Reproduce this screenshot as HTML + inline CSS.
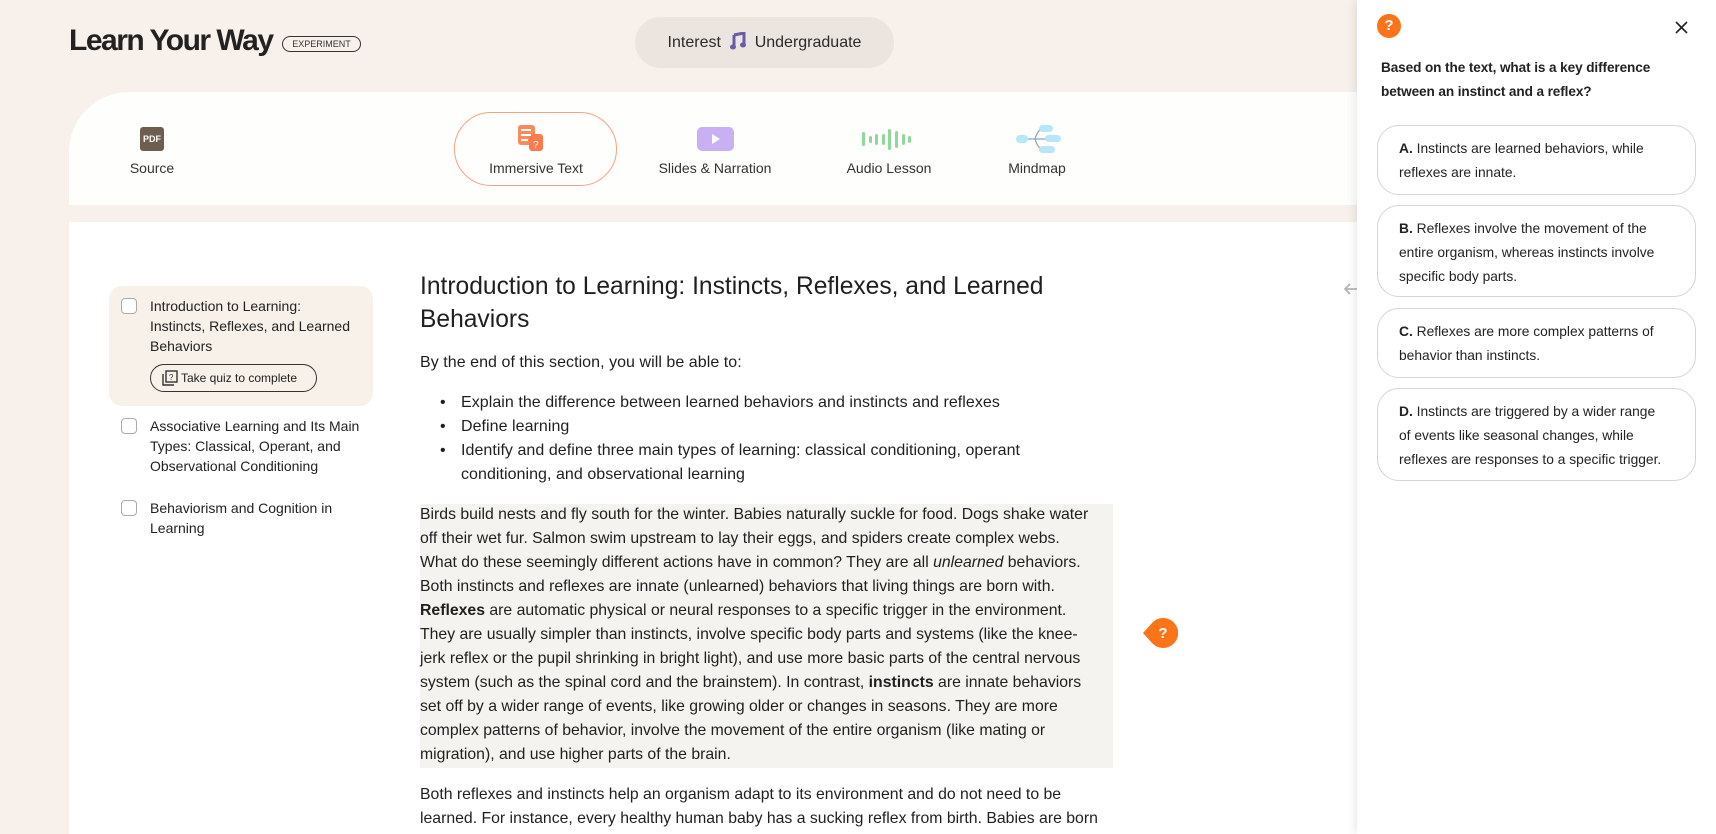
<!DOCTYPE html>
<html><head><meta charset="utf-8"><style>
*{box-sizing:border-box;margin:0;padding:0}
body{width:1716px;height:834px;overflow:hidden;background:#f7f0eb;font-family:"Liberation Sans",sans-serif;color:#1f1f1f;position:relative}
.abs{position:absolute}
.nw{white-space:nowrap}
.title{left:69px;top:24px;font-size:30px;font-weight:bold;letter-spacing:-1.5px;color:#222}
.badge{left:282px;top:36px;width:79px;height:16px;border:1.3px solid #333;border-radius:9px;font-size:9px;text-align:center;line-height:14px;color:#333}
.pill{left:635px;top:17px;width:259px;height:51px;background:#ebe4df;border-radius:26px;font-size:16px;line-height:51px;text-align:center;color:#2a2a2a}
.card{left:69px;top:92px;width:1288px;height:113px;background:#fefefc;border-top-left-radius:60px}
.content{left:69px;top:222px;width:1288px;height:612px;background:#fff}
.tab{top:160px;font-size:14px;color:#333;transform:translateX(-50%)}
.side{font-size:14px;line-height:20px;color:#222}
.cb{width:16px;height:16px;border:1.3px solid #aaa;border-radius:4px;background:#fff}
.body{font-size:16px;letter-spacing:0.05px;line-height:24px;color:#1f1f1f}
.body2{font-size:15.8px;letter-spacing:0;line-height:24px;color:#1f1f1f}
.opt{left:1377px;width:319px;border:1.3px solid #d5d5d5;border-radius:22px;padding:11px 0 0 21px;font-size:13.8px;line-height:24px;color:#222}
</style></head><body>
<div class="abs title nw">Learn Your Way</div>
<div class="abs badge">EXPERIMENT</div>
<div class="abs pill nw">Interest &nbsp;<svg width="16" height="18" style="vertical-align:-3px"><path d="M4 3 L14 1 V13" stroke="#6a5aa8" stroke-width="3" fill="none"/><path d="M4 3 V15" stroke="#6a5aa8" stroke-width="3"/><ellipse cx="3" cy="15" rx="3" ry="2.5" fill="#6a5aa8"/><ellipse cx="13" cy="13" rx="3" ry="2.5" fill="#6a5aa8"/></svg>&nbsp; Undergraduate</div>

<div class="abs card"></div>
<div class="abs content"></div>

<div class="abs" style="left:140px;top:127px;width:24px;height:24px;background:#6e5e4f;border-radius:3px;color:#fff;font-size:9px;font-weight:bold;text-align:center;line-height:24px">PDF</div>
<div class="abs tab" style="left:152px">Source</div>
<div class="abs" style="left:454px;top:112px;width:163px;height:74px;border:1.3px solid #f3a383;border-radius:37px"></div>
<svg class="abs" style="left:517px;top:124px" width="36" height="30"><rect x="1" y="1" width="17" height="20" rx="3" fill="#f98a5c"/><rect x="12" y="10" width="14" height="17" rx="3" fill="#fb7b4e"/><rect x="4" y="5" width="10" height="2" fill="#fff"/><rect x="4" y="10" width="10" height="2" fill="#fff"/><rect x="4" y="15" width="7" height="2" fill="#fff"/><text x="16" y="24" font-size="10" fill="#fff" font-family="Liberation Sans">?</text></svg>
<div class="abs tab" style="left:536px">Immersive Text</div>
<div class="abs" style="left:697px;top:127px;width:37px;height:24px;background:#c9b0f2;border-radius:5px"></div>
<svg class="abs" style="left:710px;top:133px" width="12" height="12"><path d="M2 1 L10 6 L2 11Z" fill="#fff"/></svg>
<div class="abs tab" style="left:715px">Slides &amp; Narration</div>
<svg class="abs" style="left:862px;top:128px" width="56" height="24"><g fill="#8fd89a"><rect x="0" y="4" width="3" height="14" rx="1.5"/><rect x="7" y="8" width="3" height="7" rx="1.5"/><rect x="13" y="6" width="3" height="11" rx="1.5"/><rect x="20" y="6" width="3" height="11" rx="1.5"/><rect x="26" y="1" width="3" height="21" rx="1.5"/><rect x="33" y="3" width="3" height="17" rx="1.5"/><rect x="40" y="6" width="3" height="11" rx="1.5"/><rect x="46" y="8" width="3" height="7" rx="1.5"/></g></svg>
<div class="abs tab" style="left:889px">Audio Lesson</div>
<svg class="abs" style="left:1015px;top:124px" width="48" height="30"><path d="M13 15 L20 15 M20 15 Q23 5 28 5 M20 15 L32 15 M20 15 Q23 25 28 25" stroke="#8aa9b8" stroke-width="1.3" fill="none"/><g fill="#b8e6f7"><rect x="1" y="11" width="12" height="8" rx="4"/><rect x="24" y="1" width="14" height="7" rx="3.5"/><rect x="30" y="11" width="16" height="7" rx="3.5"/><rect x="24" y="22" width="16" height="7" rx="3.5"/></g></svg>
<div class="abs tab" style="left:1037px">Mindmap</div>

<div class="abs" style="left:109px;top:286px;width:264px;height:120px;background:#f7f1ea;border-radius:13px"></div>
<div class="abs cb" style="left:121px;top:298px"></div>
<div class="abs side nw" style="left:150px;top:296px">Introduction to Learning:<br>Instincts, Reflexes, and Learned<br>Behaviors</div>
<div class="abs nw" style="left:150px;top:364px;width:167px;height:28px;border:1.3px solid #333;border-radius:14px;font-size:12px;line-height:26px;padding-left:30px;color:#222">Take quiz to complete</div>
<svg class="abs" style="left:162px;top:370px" width="16" height="16"><rect x="4" y="1" width="11" height="11" fill="none" stroke="#333" stroke-width="1.4"/><path d="M1 4 V15 H12" fill="none" stroke="#333" stroke-width="1.4"/><text x="7" y="10" font-size="8" font-family="Liberation Sans" fill="#333">?</text></svg>
<div class="abs cb" style="left:121px;top:418px"></div>
<div class="abs side nw" style="left:150px;top:416px">Associative Learning and Its Main<br>Types: Classical, Operant, and<br>Observational Conditioning</div>
<div class="abs cb" style="left:121px;top:500px"></div>
<div class="abs side nw" style="left:150px;top:498px">Behaviorism and Cognition in<br>Learning</div>

<div class="abs nw" style="left:420px;top:270px;font-size:24.6px;line-height:33px;color:#1f1f1f">Introduction to Learning: Instincts, Reflexes, and Learned<br>Behaviors</div>
<div class="abs body nw" style="left:420px;top:351px">By the end of this section, you will be able to:</div>
<div class="abs body nw" style="left:440px;top:391px">•<br>•<br>•</div>
<div class="abs body nw" style="left:461px;top:391px">Explain the difference between learned behaviors and instincts and reflexes<br>Define learning<br>Identify and define three main types of learning: classical conditioning, operant<br>conditioning, and observational learning</div>
<div class="abs" style="left:420px;top:504px;width:693px;height:264px;background:#f5f3f0"></div>
<div class="abs body2 nw" style="left:420px;top:503px">Birds build nests and fly south for the winter. Babies naturally suckle for food. Dogs shake water<br>off their wet fur. Salmon swim upstream to lay their eggs, and spiders create complex webs.<br>What do these seemingly different actions have in common? They are all <i>unlearned</i> behaviors.<br>Both instincts and reflexes are innate (unlearned) behaviors that living things are born with.<br><b>Reflexes</b> are automatic physical or neural responses to a specific trigger in the environment.<br>They are usually simpler than instincts, involve specific body parts and systems (like the knee-<br>jerk reflex or the pupil shrinking in bright light), and use more basic parts of the central nervous<br>system (such as the spinal cord and the brainstem). In contrast, <b>instincts</b> are innate behaviors<br>set off by a wider range of events, like growing older or changes in seasons. They are more<br>complex patterns of behavior, involve the movement of the entire organism (like mating or<br>migration), and use higher parts of the brain.</div>
<div class="abs body2 nw" style="left:420px;top:783px">Both reflexes and instincts help an organism adapt to its environment and do not need to be<br>learned. For instance, every healthy human baby has a sucking reflex from birth. Babies are born</div>
<svg class="abs" style="left:1142px;top:617px" width="36" height="32"><path d="M1 16 L10 6 A15 15 0 1 1 10 26 Z" fill="#fb7417"/><text x="21" y="21" font-size="15" font-weight="bold" fill="#fff" text-anchor="middle" font-family="Liberation Sans">?</text></svg>
<svg class="abs" style="left:1343px;top:282px" width="16" height="14"><path d="M15 7 H2 M7 2 L2 7 L7 12" stroke="#b5b5b5" stroke-width="1.8" fill="none"/></svg>

<div class="abs" style="left:1357px;top:0;width:359px;height:834px;background:#fff;box-shadow:-3px 0 8px rgba(0,0,0,0.08)"></div>
<div class="abs" style="left:1377px;top:14px;width:24px;height:24px;border-radius:12px;background:#fb7417;color:#fff;font-weight:bold;font-size:15px;text-align:center;line-height:24px">?</div>
<svg class="abs" style="left:1675px;top:21px" width="13" height="13"><path d="M1 1L12 12M12 1L1 12" stroke="#222" stroke-width="1.6"/></svg>
<div class="abs nw" style="left:1381px;top:56px;font-size:13.6px;line-height:24px;font-weight:bold;color:#222;letter-spacing:-0.1px">Based on the text, what is a key difference<br>between an instinct and a reflex?</div>
<div class="abs opt nw" style="top:125px;height:70px"><b>A.</b> Instincts are learned behaviors, while<br>reflexes are innate.</div>
<div class="abs opt nw" style="top:205px;height:92px"><b>B.</b> Reflexes involve the movement of the<br>entire organism, whereas instincts involve<br>specific body parts.</div>
<div class="abs opt nw" style="top:308px;height:70px"><b>C.</b> Reflexes are more complex patterns of<br>behavior than instincts.</div>
<div class="abs opt nw" style="top:388px;height:93px"><b>D.</b> Instincts are triggered by a wider range<br>of events like seasonal changes, while<br>reflexes are responses to a specific trigger.</div>
</body></html>
